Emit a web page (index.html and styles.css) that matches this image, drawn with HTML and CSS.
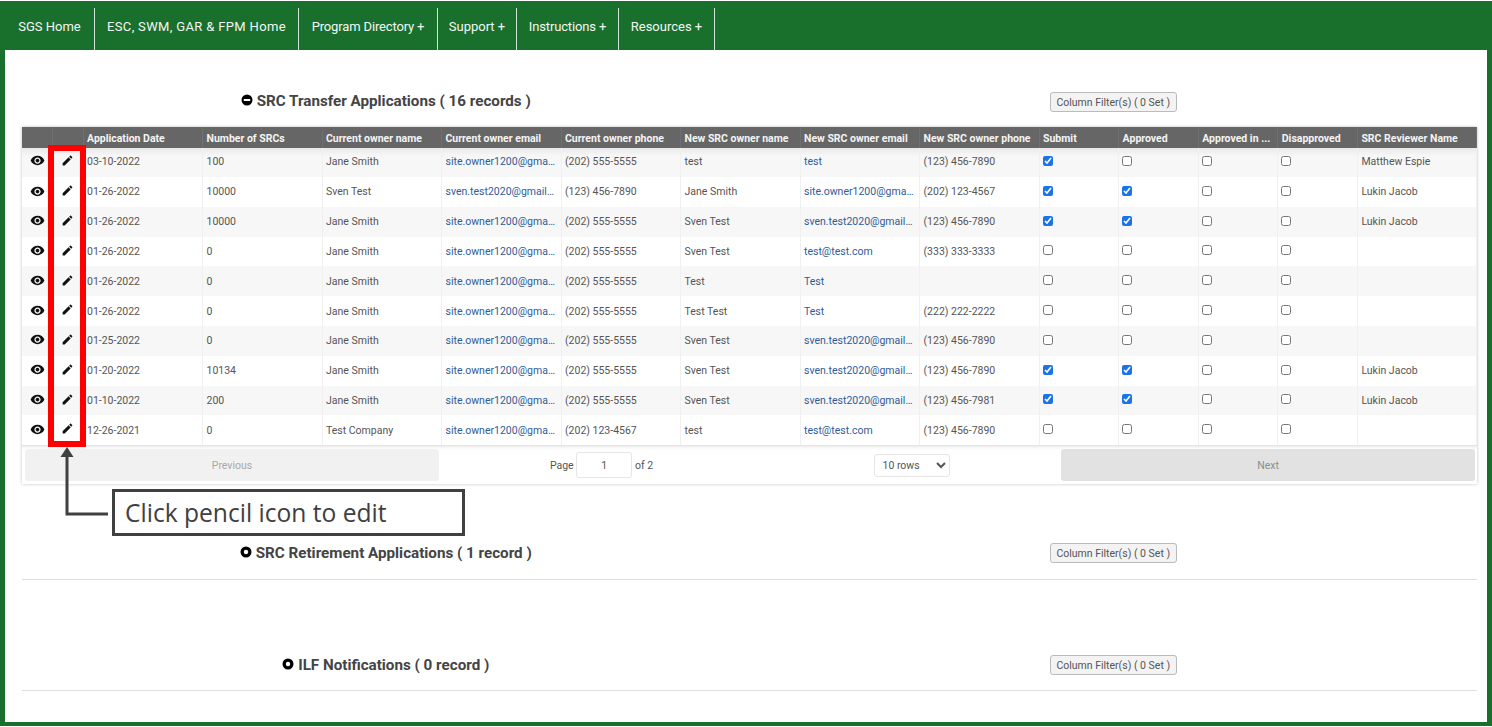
FILE: index.html
```html
<!DOCTYPE html>
<html lang="en">
<head>
    <meta charset="UTF-8">
    <meta name="viewport" content="width=device-width, initial-scale=1.0">
    <title>SRC Transfer Applications</title>
    <link rel="stylesheet" href="styles.css">
</head>
<body>
    <svg class="defs" width="0" height="0">
        <symbol id="eye" viewBox="0 0 24 24"><path d="M12 4.5C7 4.5 2.73 7.61 1 12c1.73 4.39 6 7.5 11 7.5s9.27-3.11 11-7.5c-1.73-4.39-6-7.5-11-7.5zM12 17c-2.76 0-5-2.24-5-5s2.24-5 5-5 5 2.24 5 5-2.24 5-5 5zm0-8c-1.66 0-3 1.34-3 3s1.34 3 3 3 3-1.34 3-3-1.34-3-3-3z"/></symbol>
        <symbol id="pencil" viewBox="0 0 24 24"><path d="M3 17.25V21h3.75L17.81 9.94l-3.75-3.75L3 17.25zM20.71 7.04c.39-.39.39-1.02 0-1.41l-2.34-2.34c-.39-.39-1.02-.39-1.41 0l-1.83 1.83 3.75 3.75 1.83-1.83z"/></symbol>
        <symbol id="minus" viewBox="0 0 12 12"><circle cx="6" cy="6" r="5.5"/><rect x="2.8" y="5" width="6.4" height="2" fill="#fff"/></symbol>
        <symbol id="plus" viewBox="0 0 12 12"><circle cx="6" cy="6" r="5.5"/><circle cx="6" cy="6" r="2.2" fill="#fff"/></symbol>
    </svg>

    <div class="frame">
        <nav class="topnav">
            <a>SGS Home</a>
            <a class="wider">ESC, SWM, GAR &amp; FPM Home</a>
            <a class="narrower">Program Directory +</a>
            <a>Support +</a>
            <a class="narrower">Instructions +</a>
            <a>Resources +</a>
        </nav>

        <main class="content">
            <div class="section-head first">
                <h2><svg class="toggle"><use href="#minus"/></svg>SRC Transfer Applications ( 16 records )</h2>
                <button class="filter-btn">Column Filter(s) ( 0 Set )</button>
            </div>

            <div class="table-wrap">
                <table class="records">
                    <colgroup>
                        <col class="c-icon"><col class="c-icon2">
                        <col class="c-wide"><col class="c-wide"><col class="c-wide"><col class="c-wide">
                        <col class="c-wide"><col class="c-wide"><col class="c-wide"><col class="c-wide">
                        <col class="c-check"><col class="c-check"><col class="c-check"><col class="c-check">
                        <col>
                    </colgroup>
                    <thead>
                        <tr>
                            <th></th><th></th>
                            <th>Application Date</th><th>Number of SRCs</th><th>Current owner name</th><th>Current owner email</th>
                            <th>Current owner phone</th><th>New SRC owner name</th><th>New SRC owner email</th><th>New SRC owner phone</th>
                            <th>Submit</th><th>Approved</th><th>Approved in ...</th><th>Disapproved</th><th>SRC Reviewer Name</th>
                        </tr>
                    </thead>
                    <tbody>
                        <tr>
                            <td class="ic"><svg class="eye"><use href="#eye"/></svg></td><td class="ic"><svg class="pen"><use href="#pencil"/></svg></td>
                            <td>03-10-2022</td><td>100</td><td>Jane Smith</td><td class="link">site.owner1200@gmail.com</td><td>(202) 555-5555</td>
                            <td>test</td><td class="link">test</td><td>(123) 456-7890</td>
                            <td><input type="checkbox" checked></td><td><input type="checkbox"></td><td><input type="checkbox"></td><td><input type="checkbox"></td>
                            <td>Matthew Espie</td>
                        </tr>
                        <tr>
                            <td class="ic"><svg class="eye"><use href="#eye"/></svg></td><td class="ic"><svg class="pen"><use href="#pencil"/></svg></td>
                            <td>01-26-2022</td><td>10000</td><td>Sven Test</td><td class="link">sven.test2020@gmail.com</td><td>(123) 456-7890</td>
                            <td>Jane Smith</td><td class="link">site.owner1200@gmail.com</td><td>(202) 123-4567</td>
                            <td><input type="checkbox" checked></td><td><input type="checkbox" checked></td><td><input type="checkbox"></td><td><input type="checkbox"></td>
                            <td>Lukin Jacob</td>
                        </tr>
                        <tr>
                            <td class="ic"><svg class="eye"><use href="#eye"/></svg></td><td class="ic"><svg class="pen"><use href="#pencil"/></svg></td>
                            <td>01-26-2022</td><td>10000</td><td>Jane Smith</td><td class="link">site.owner1200@gmail.com</td><td>(202) 555-5555</td>
                            <td>Sven Test</td><td class="link">sven.test2020@gmail.com</td><td>(123) 456-7890</td>
                            <td><input type="checkbox" checked></td><td><input type="checkbox" checked></td><td><input type="checkbox"></td><td><input type="checkbox"></td>
                            <td>Lukin Jacob</td>
                        </tr>
                        <tr>
                            <td class="ic"><svg class="eye"><use href="#eye"/></svg></td><td class="ic"><svg class="pen"><use href="#pencil"/></svg></td>
                            <td>01-26-2022</td><td>0</td><td>Jane Smith</td><td class="link">site.owner1200@gmail.com</td><td>(202) 555-5555</td>
                            <td>Sven Test</td><td class="link">test@test.com</td><td>(333) 333-3333</td>
                            <td><input type="checkbox"></td><td><input type="checkbox"></td><td><input type="checkbox"></td><td><input type="checkbox"></td>
                            <td></td>
                        </tr>
                        <tr>
                            <td class="ic"><svg class="eye"><use href="#eye"/></svg></td><td class="ic"><svg class="pen"><use href="#pencil"/></svg></td>
                            <td>01-26-2022</td><td>0</td><td>Jane Smith</td><td class="link">site.owner1200@gmail.com</td><td>(202) 555-5555</td>
                            <td>Test</td><td class="link">Test</td><td></td>
                            <td><input type="checkbox"></td><td><input type="checkbox"></td><td><input type="checkbox"></td><td><input type="checkbox"></td>
                            <td></td>
                        </tr>
                        <tr>
                            <td class="ic"><svg class="eye"><use href="#eye"/></svg></td><td class="ic"><svg class="pen"><use href="#pencil"/></svg></td>
                            <td>01-26-2022</td><td>0</td><td>Jane Smith</td><td class="link">site.owner1200@gmail.com</td><td>(202) 555-5555</td>
                            <td>Test Test</td><td class="link">Test</td><td>(222) 222-2222</td>
                            <td><input type="checkbox"></td><td><input type="checkbox"></td><td><input type="checkbox"></td><td><input type="checkbox"></td>
                            <td></td>
                        </tr>
                        <tr>
                            <td class="ic"><svg class="eye"><use href="#eye"/></svg></td><td class="ic"><svg class="pen"><use href="#pencil"/></svg></td>
                            <td>01-25-2022</td><td>0</td><td>Jane Smith</td><td class="link">site.owner1200@gmail.com</td><td>(202) 555-5555</td>
                            <td>Sven Test</td><td class="link">sven.test2020@gmail.com</td><td>(123) 456-7890</td>
                            <td><input type="checkbox"></td><td><input type="checkbox"></td><td><input type="checkbox"></td><td><input type="checkbox"></td>
                            <td></td>
                        </tr>
                        <tr>
                            <td class="ic"><svg class="eye"><use href="#eye"/></svg></td><td class="ic"><svg class="pen"><use href="#pencil"/></svg></td>
                            <td>01-20-2022</td><td>10134</td><td>Jane Smith</td><td class="link">site.owner1200@gmail.com</td><td>(202) 555-5555</td>
                            <td>Sven Test</td><td class="link">sven.test2020@gmail.com</td><td>(123) 456-7890</td>
                            <td><input type="checkbox" checked></td><td><input type="checkbox" checked></td><td><input type="checkbox"></td><td><input type="checkbox"></td>
                            <td>Lukin Jacob</td>
                        </tr>
                        <tr>
                            <td class="ic"><svg class="eye"><use href="#eye"/></svg></td><td class="ic"><svg class="pen"><use href="#pencil"/></svg></td>
                            <td>01-10-2022</td><td>200</td><td>Jane Smith</td><td class="link">site.owner1200@gmail.com</td><td>(202) 555-5555</td>
                            <td>Sven Test</td><td class="link">sven.test2020@gmail.com</td><td>(123) 456-7981</td>
                            <td><input type="checkbox" checked></td><td><input type="checkbox" checked></td><td><input type="checkbox"></td><td><input type="checkbox"></td>
                            <td>Lukin Jacob</td>
                        </tr>
                        <tr>
                            <td class="ic"><svg class="eye"><use href="#eye"/></svg></td><td class="ic"><svg class="pen"><use href="#pencil"/></svg></td>
                            <td>12-26-2021</td><td>0</td><td>Test Company</td><td class="link">site.owner1200@gmail.com</td><td>(202) 123-4567</td>
                            <td>test</td><td class="link">test@test.com</td><td>(123) 456-7890</td>
                            <td><input type="checkbox"></td><td><input type="checkbox"></td><td><input type="checkbox"></td><td><input type="checkbox"></td>
                            <td></td>
                        </tr>
                    </tbody>
                </table>

                <div class="pager">
                    <button class="page-btn prev">Previous</button>
                    <div class="page-mid">
                        <span class="page-info">Page <input class="page-input" value="1"> of 2</span>
                        <select class="page-size"><option>10 rows</option></select>
                    </div>
                    <button class="page-btn next">Next</button>
                </div>
            </div>

            <div class="section-head second">
                <h2><svg class="toggle"><use href="#plus"/></svg>SRC Retirement Applications ( 1 record )</h2>
                <button class="filter-btn">Column Filter(s) ( 0 Set )</button>
            </div>

            <div class="section-head third">
                <h2><svg class="toggle"><use href="#plus"/></svg>ILF Notifications ( 0 record )</h2>
                <button class="filter-btn">Column Filter(s) ( 0 Set )</button>
            </div>
        </main>
    </div>

    <!-- annotation drawn over the screenshot -->
    <div class="red-box"></div>
    <svg class="arrow" width="60" height="80" viewBox="0 0 60 80">
        <path d="M19 8V67H60" fill="none" stroke="#404040" stroke-width="3"/>
        <path d="M19 0L12.5 10H25.5Z" fill="#404040"/>
    </svg>
    <div class="callout">Click pencil icon to edit</div>
</body>
</html>
```

FILE: styles.css
```css
* {
    box-sizing: border-box;
}
body {
    margin: 0;
    padding-top: 1px;
    font-family: Roboto, Arial, sans-serif;
    background-color: #fff;
    color: #555;
}
.defs {
    position: absolute;
}
.frame {
    width: 1492px;
    height: 725px;
    border: solid #19702c;
    border-width: 0 5px 4px 5px;
    overflow: hidden;
}

/* top menu */
.topnav {
    display: grid;
    grid-template-columns: 90px 204px 139px 79px 102px 96px;
    align-items: end;
    justify-content: start;
    height: 49px;
    margin: 0 -5px;
    padding-left: 5px;
    background-color: #19702c;
}
.topnav a {
    height: 42px;
    padding-bottom: 4px;
    border-right: 1px solid #d5e4d8;
    color: #f2f7f3;
    font-size: 13px;
    line-height: 38px;
    text-align: center;
    white-space: nowrap;
}
.topnav .wider {
    letter-spacing: 0.35px;
}
.topnav .narrower {
    letter-spacing: -0.15px;
}

.content {
    padding: 0 10px 0 17px;
}

/* section titles */
.section-head {
    display: grid;
    grid-template-columns: 1fr 1fr;
    text-align: center;
}
.section-head h2 {
    margin: 0;
    font-size: 15.2px;
    line-height: 18px;
    font-weight: 700;
    color: #444;
}
.second h2, .third h2 {
    line-height: 20px;
}
.first {
    margin-top: 42px;
}
.second {
    margin-top: 59px;
    padding-bottom: 16px;
    border-bottom: 1px solid #ddd;
}
.third {
    margin-top: 75px;
    padding-bottom: 15px;
    border-bottom: 1px solid #ddd;
}
.toggle {
    width: 12px;
    height: 12px;
    margin-right: 4px;
    vertical-align: 0;
}
.filter-btn {
    display: block;
    height: 20px;
    width: 127px;
    margin: 0 auto;
    padding: 0;
    background-color: #f3f3f3;
    border: 1px solid #bbb;
    border-radius: 3px;
    color: #555;
    font-family: Roboto, Arial, sans-serif;
    font-size: 10.5px;
}

/* table */
.table-wrap {
    margin-top: 15px;
    box-shadow: 0 0 3px rgba(0,0,0,0.25);
}
.records {
    width: 100%;
    table-layout: fixed;
    border-collapse: collapse;
    font-size: 10.5px;
}
.c-icon { width: 30px; }
.c-icon2 { width: 31px; }
.c-wide { width: 119.5px; }
.c-check { width: 79.6px; }
.records th {
    height: 21px;
    padding: 2px 4px 0 3.5px;
    background-color: #666;
    border-right: 1px solid #707070;
    color: #f4f4f4;
    font-size: 10.5px;
    font-weight: 700;
    text-align: left;
    white-space: nowrap;
    overflow: hidden;
}
.records td {
    height: 29.8px;
    padding: 0 4px 0 3.5px;
    border-right: 1px solid #f0f0f0;
    color: #555;
    white-space: nowrap;
    overflow: hidden;
    text-overflow: ellipsis;
}
.records tbody tr:first-child td {
    height: 29px;
    padding-bottom: 2px;
}
.records tbody tr:nth-child(odd) td {
    background-color: #f7f7f7;
}
.records tbody tr:first-child td {
    background-image: linear-gradient(#e9e9e9, #f7f7f7 8px);
}
.records td.link {
    color: #2f5c98;
}
.records td.ic {
    padding-left: 0;
    padding-right: 0;
    text-align: center;
}
.eye, .pen {
    display: inline-block;
    vertical-align: middle;
    fill: #111;
}
.eye {
    width: 15px;
    height: 15px;
    margin-top: -3px;
    margin-left: 1px;
}
.pen {
    width: 13px;
    height: 13px;
    margin-top: -4px;
    margin-left: -1px;
}
.records input {
    display: block;
    width: 10px;
    height: 10px;
    margin: -2px 0 0 -0.5px;
    accent-color: #1a73e8;
}

/* pagination */
.pager {
    display: flex;
    align-items: center;
    height: 39px;
    padding: 3px 2px 3px 3px;
    border-top: 1px solid #e4e4e4;
    box-shadow: inset 0 4px 4px -4px rgba(0,0,0,0.15);
}
.page-btn {
    flex: 0 0 414px;
    height: 32px;
    border: none;
    border-radius: 3px;
    font-family: Roboto, Arial, sans-serif;
    font-size: 10.5px;
    color: #a8a8a8;
}
.prev {
    background-color: #f1f1f1;
}
.next {
    background-color: #e2e2e2;
    color: #8d8d8d;
}
.page-mid {
    flex: 1;
    display: grid;
    grid-template-columns: 311px 1fr;
    justify-items: center;
    align-items: center;
    padding-left: 7px;
}
.page-info {
    font-size: 10.5px;
    color: #555;
}
.page-input {
    width: 56px;
    height: 26px;
    margin: 0;
    border: 1px solid #e6e6e6;
    border-radius: 3px;
    color: #555;
    font-family: Roboto, Arial, sans-serif;
    font-size: 10.5px;
    text-align: center;
}
.page-size {
    width: 76px;
    height: 23px;
    margin-left: 5px;
    padding-left: 4px;
    background-color: #fff;
    border: 1px solid #e6e6e6;
    border-radius: 3px;
    color: #555;
    font-family: Roboto, Arial, sans-serif;
    font-size: 10.5px;
}

/* annotation overlay */
.red-box {
    position: absolute;
    left: 48px;
    top: 145px;
    width: 38px;
    height: 302px;
    border: 6px solid #f00;
}
.arrow {
    position: absolute;
    left: 48px;
    top: 447px;
}
.callout {
    position: absolute;
    left: 112px;
    top: 489px;
    width: 353px;
    height: 47px;
    padding-left: 10px;
    background-color: #fff;
    border: 3px solid #404040;
    color: #404040;
    font-family: "Open Sans", Arial, sans-serif;
    font-size: 24.6px;
    line-height: 41px;
    white-space: nowrap;
}
```
